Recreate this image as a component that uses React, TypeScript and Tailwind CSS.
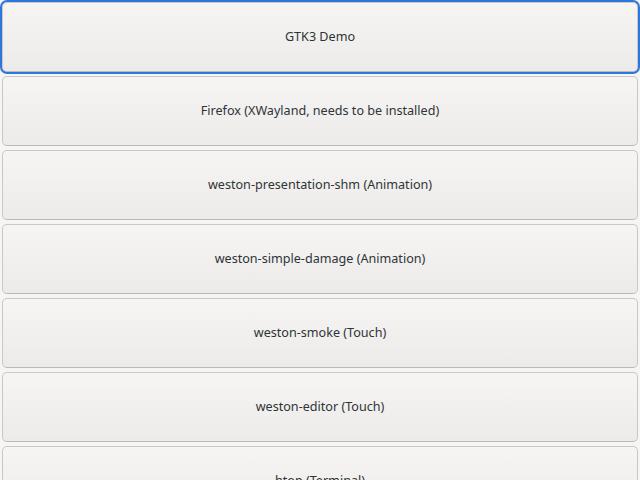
const items = [
  'GTK3 Demo',
  'Firefox (XWayland, needs to be installed)',
  'weston-presentation-shm (Animation)',
  'weston-simple-damage (Animation)',
  'weston-smoke (Touch)',
  'weston-editor (Touch)',
  'htop (Terminal)',
];

export default function App() {
  return (
    <div className="h-[480px] w-[640px] overflow-hidden bg-[#f6f5f4] font-['Noto_Sans',sans-serif]">
      <div className="flex flex-col gap-[4px] p-[2px]">
        {items.map((label, i) => (
          <button
            key={label}
            className={
              i === 0
                ? 'flex h-[70px] shrink-0 items-center justify-center rounded-[5px] border border-[#cdc7c2] border-b-[#bfb8b1] bg-gradient-to-b from-[#f6f5f4] to-[#edebe9] text-[12.6px] text-[#2e3436] outline-2 outline-[#2a77dd]'
                : 'flex h-[70px] shrink-0 items-center justify-center rounded-[5px] border border-[#cdc7c2] border-b-[#bfb8b1] bg-gradient-to-b from-[#f6f5f4] to-[#edebe9] text-[12.6px] text-[#2e3436]'
            }
          >
            {label}
          </button>
        ))}
      </div>
    </div>
  );
}
